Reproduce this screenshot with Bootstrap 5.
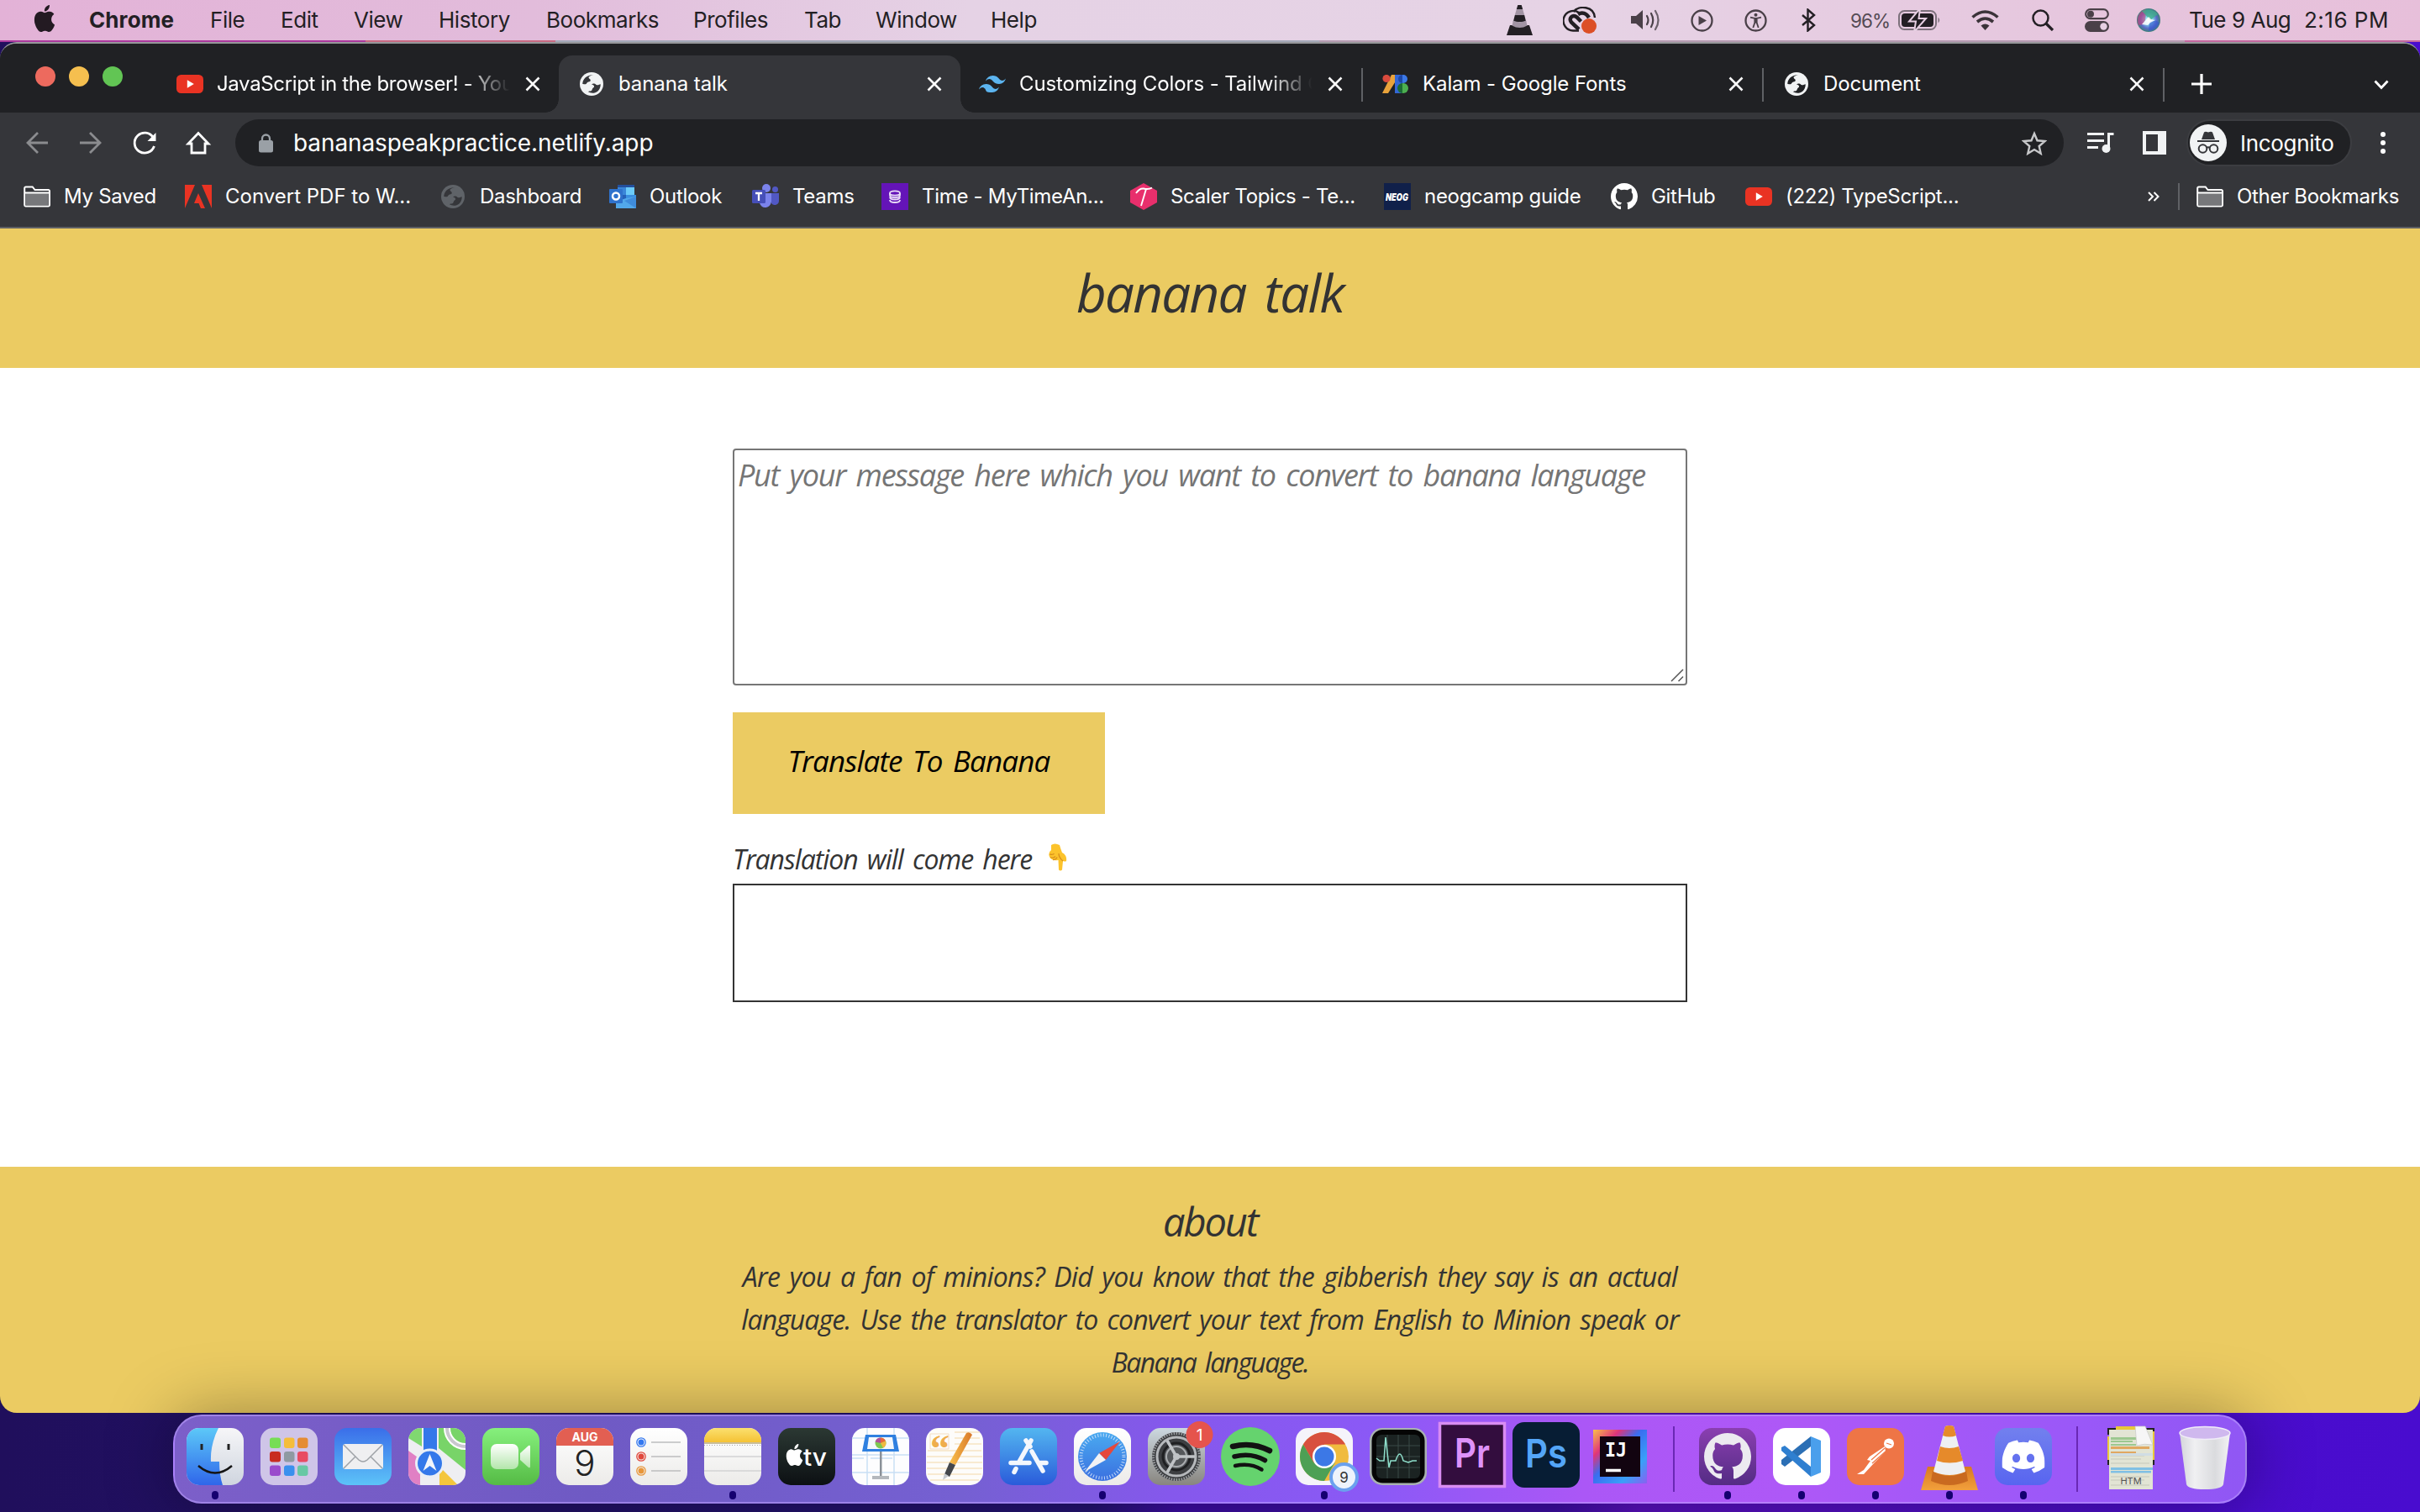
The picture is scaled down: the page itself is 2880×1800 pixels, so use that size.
<!DOCTYPE html>
<html lang="en">
<head>
<meta charset="utf-8">
<title>banana talk</title>
<link href="https://cdn.jsdelivr.net/npm/bootstrap@5.3.0/dist/css/bootstrap.min.css" rel="stylesheet">
<script src="https://cdn.jsdelivr.net/npm/bootstrap@5.3.0/dist/js/bootstrap.bundle.min.js"></script>
<style>
:root{--banana:#ebcb62;--ink:#333}
html,body{width:2880px;height:1800px;overflow:hidden}
body{font-family:Inter,"Liberation Sans",sans-serif;font-size:24px;line-height:1.2;white-space:nowrap;
 background:linear-gradient(90deg,#200f5c 0,#241373 1300px,#3d0da4 1400px,#3d0da4 1850px,#5a10c0 1950px,#4a0dcc 2600px,#490ccf 100%)}
svg{display:block;flex:none}
/* system menu bar */
.sysbar{height:48px;padding-left:40px;font-size:26px;color:#231f24;letter-spacing:-.45px;
 display:grid;align-items:center;background:linear-gradient(90deg,#e3b2d7,#e2bcdb 22%,#e5d2e5 40%,#e6d3e5 65%,#e6c5dd 88%,#e7bfda);
 grid-template-columns:66px 144px 84px 87px 101px 128px 175px 132px 85px 137px 614px 67px 80px 72px 64px 67px 59px 57px 87px 72px 63px 62px 62px 137px auto}
.sysbar b{letter-spacing:.1px}
.sysbar .pct{font-size:22.500px;letter-spacing:-.9px;color:#544a54}
.sysbar .clock{letter-spacing:.5px}
.wall-strip{height:2px;background:linear-gradient(90deg,#ab399d 0 435px,#c76a82 435px 661px,#a5a9b9 661px 1570px,#b59bb1 1570px 2600px,#c468a0 2600px)}
/* browser */
.browser-win{height:1632px;background:#35363a;border-top:2px solid #97989b;border-radius:20px;overflow:hidden;position:relative}
.tabstrip{height:82px;background:#202124;color:#fff;--land:#202124}
.lights{width:187px;padding-left:42px;gap:16px}
.lights i{width:24px;height:24px;border-radius:50%;margin-top:-4px}
.lights .l1{background:#ed6a5e}.lights .l2{background:#f5bf4f}.lights .l3{background:#62c554}
.btab{width:478px;height:68px;margin-top:14px;padding:0 22px 0 23px;letter-spacing:-.1px}
.btab .ttl{flex:1;margin-left:16px;margin-right:15px;overflow:hidden;padding:4px 0}
.btab.faded .ttl{-webkit-mask-image:linear-gradient(90deg,#000 84%,transparent 99%)}
.btab.first .ttl{letter-spacing:-.35px}
.btab.third{width:477px;padding-left:22px}
.btab.short{width:475px}
.btab.live{background:#35363a;border-radius:16px 16px 0 0;position:relative;--land:#35363a}
.btab.live:before,.btab.live:after{content:"";position:absolute;bottom:0;width:16px;height:16px}
.btab.live:before{left:-16px;background:radial-gradient(circle at 0 0,transparent 15.5px,#35363a 16px)}
.btab.live:after{right:-16px;background:radial-gradient(circle at 100% 0,transparent 15.5px,#35363a 16px)}
.sep{width:2px;height:40px;background:#5f6165}
.tabstrip .sep{margin-top:16px}
.plus{margin:14px 0 0 32px}.caret{margin:16px 0 0 193px}
.addrbar{height:72px;color:#fff}
.omni{width:2176px;height:56px;border-radius:28px;background:#202124;font-size:28px;padding:0 20px 0 28px;letter-spacing:-.1px}
.omni span{margin-left:24px;padding-top:2px}
.incog{width:197px;height:56px;border-radius:28px;background:#202124;border:2px solid #3c3d41;padding-left:2px;font-size:26px;letter-spacing:-.3px}
.incog span{margin-left:16px;padding-top:2px}
.kebab{margin-left:33px}
.marks{height:64px;color:#fff;display:grid;align-items:center;padding-left:28px;padding-bottom:8px;letter-spacing:-.3px;--land:#35363a;
 grid-template-columns:192px 304px 201px 170px 154px 296px 302px 270px 160px 479px 36px 22px auto}
.marks .bmk{display:flex;align-items:center;gap:16px}
.marks .wide-name{letter-spacing:0}.marks .sep{height:32px}
.chrome-edge{height:2px;background:#5f6063}
/* page */
.kalam{font-family:"Open Sans","Noto Sans",sans-serif;font-style:italic;color:var(--ink)}
.kalam span{word-spacing:.12em}
.site-top{height:166px;background:var(--banana)}
.site-top h1{font-size:62px;line-height:1;margin:0;padding-top:45px;font-weight:500;letter-spacing:-1.760px}
.site-main{width:1136px;height:951px;padding-top:96px}
.msg{height:282px;width:1136px;border:2px solid #767676;border-radius:4px;padding:6px 4px;font-size:36px;line-height:48px;color:#757575;letter-spacing:-1.280px}
.go{width:443px;height:121px;margin-top:32px;background:var(--banana);color:#000;border:0;font-size:35px;font-weight:500;letter-spacing:-.86px;padding:0 0 6px}
.outlbl{font-size:32px;line-height:52px;margin-top:28px;height:55px;letter-spacing:-1.040px}
.outlbl svg{margin:7px 0 0 20px}
.outbox{height:141px;border:2px solid #333}
.site-foot{height:293px;background:var(--banana)}
.site-foot h2{font-size:47px;line-height:56px;margin:0;padding-top:37px;font-weight:500;letter-spacing:-2.150px}
.site-foot p{font-size:32px;line-height:51px;margin:0;padding-top:12px;letter-spacing:-.83px}
.site-foot .ln1{letter-spacing:-.74px}.site-foot .ln2{letter-spacing:-.93px}.site-foot .ln3{letter-spacing:-1.650px}
/* dock */
.dock-bar{width:2468px;height:106px;margin:2px 0 0 206px;border-radius:34px;border:2px solid rgba(190,160,255,.55);padding:0 4px;position:relative;
 background:linear-gradient(90deg,#7c5fc9 0,#6f5ac4 20%,#7560d2 38%,#8558ec 48%,#8b59f6 58%,#ab57f6 68%,#ae58f7 78%,#9a58f8 92%,#9057f4);
 box-shadow:0 0 80px rgba(0,0,0,.36)}
.app{width:88px;height:100%;position:relative;padding-bottom:6px}
.app>svg{overflow:visible}
.app.run:after{content:"";position:absolute;left:40px;bottom:3px;width:8px;height:10px;border-radius:4px;background:#150070}
.app.tall{padding-bottom:11px}.app.low{padding-bottom:2px}
.dsep{width:40px}.dsep i{width:2px;height:78px;background:#6a28b4}
svg text{font-family:Inter,"Liberation Sans",sans-serif}
svg .serif{font-family:"Liberation Serif",serif}
svg .mono{font-family:"DejaVu Sans Mono",monospace}
</style>
</head>
<body>
<svg width="0" height="0" class="position-absolute">
<defs>
<symbol id="globe" viewBox="0 0 28 28"><circle cx="14" cy="14" r="14" fill="currentColor"/><path d="M16 3.200c-3 .8-5.700 1.500-5.400 3.300.3 1.500 2.400 1.700 2.200 3.400-.2 1.500-2.500 1.200-3.700 2-1 .7-1 2.100-2.300 2.400-1.300.2-2-.5-3.500-.3 0-5.600 4.600-11 12.700-10.800zM24.800 14.200c-1.500.1-2.600 1.200-4.200 1-1.600-.1-2-1.700-3.500-1.700s-2 .6-3.300.6c1.600 1.300 3.300 1.200 3.300 2.900 0 1.300-1.400 1.500-2 2.500-.6 1.200-.3 2.200-1.800 2.800-1.200.4-2.500.2-3.300 1 4 2.800 14.300 2.500 14.800-9.100z" fill="var(--land)"/></symbol>
<symbol id="xx" viewBox="0 0 18 18"><path d="M1.500 1.500l15 15M16.500 1.500l-15 15" stroke="#fff" stroke-width="2.500" fill="none"/></symbol>
<symbol id="yt" viewBox="0 0 32 22"><rect width="32" height="22" rx="5.500" fill="#e93323"/><path d="M12.800 6.200v9.600l8-4.800z" fill="#fff"/></symbol>
<symbol id="folder" viewBox="0 0 32 26"><path d="M1.200 23V3a1.500 1.500 0 0 1 1.500-1.500h8L13.500 5h16A1.500 1.500 0 0 1 31 6.500V23a1.500 1.500 0 0 1-1.500 1.500h-27A1.500 1.500 0 0 1 1.200 23z" fill="#35363a" stroke="#fff" stroke-width="2"/><path d="M2.200 9h27.600v14.500H2.200z" fill="#77787b"/><path d="M2 8.500h28" stroke="#fff" stroke-width="2"/></symbol>
<symbol id="gh" viewBox="0 0 16 16"><path fill="currentColor" d="M8 0C3.580 0 0 3.580 0 8c0 3.540 2.290 6.530 5.470 7.590.4.070.55-.17.55-.38 0-.19-.01-.82-.01-1.490-2.010.37-2.530-.49-2.690-.94-.09-.23-.48-.94-.82-1.130-.28-.15-.68-.52-.01-.53.63-.01 1.080.58 1.230.82.72 1.210 1.870.87 2.330.66.07-.52.28-.87.51-1.070-1.780-.2-3.640-.89-3.640-3.950 0-.87.31-1.590.82-2.150-.08-.2-.36-1.020.08-2.120 0 0 .67-.21 2.200.82.64-.18 1.320-.27 2-.27s1.360.09 2 .27c1.530-1.040 2.200-.82 2.200-.82.44 1.100.16 1.920.08 2.120.51.56.82 1.270.82 2.150 0 3.070-1.870 3.750-3.650 3.950.29.25.54.73.54 1.480 0 1.070-.01 1.930-.01 2.200 0 .21.15.46.55.38A8.010 8.010 0 0 0 16 8c0-4.420-3.580-8-8-8z"/></symbol>
<symbol id="apple" viewBox="1 0 14 16" preserveAspectRatio="none"><path fill="currentColor" d="M11.182.008C11.148-.03 9.923.023 8.857 1.180c-1.066 1.156-.902 2.482-.878 2.516s1.520.087 2.475-1.258.762-2.391.728-2.430zm3.314 11.733c-.048-.096-2.325-1.234-2.113-3.422s1.675-2.789 1.698-2.854-.597-.79-1.254-1.157a3.700 3.700 0 0 0-1.563-.434c-.108-.003-.483-.095-1.254.116-.508.139-1.653.589-1.968.607-.316.018-1.256-.522-2.267-.665-.647-.125-1.333.131-1.824.328-.49.196-1.422.754-2.074 2.237-.652 1.482-.311 3.830-.067 4.560s.625 1.924 1.273 2.796c.576.984 1.340 1.667 1.659 1.899s1.219.386 1.843.067c.502-.308 1.408-.485 1.766-.472.357.013 1.061.154 1.782.539.571.197 1.111.115 1.652-.105.541-.221 1.324-1.059 2.238-2.758q.52-1.185.473-1.282"/></symbol>
<linearGradient id="g-find" x2="0" y2="1"><stop stop-color="#5cc8f8"/><stop offset="1" stop-color="#2f66ea"/></linearGradient>
<linearGradient id="g-lite" x2="0" y2="1"><stop stop-color="#f6f6f8"/><stop offset="1" stop-color="#cfd5df"/></linearGradient>
<linearGradient id="g-mail" x2="0" y2="1"><stop stop-color="#3a6ee9"/><stop offset="1" stop-color="#5cc3f8"/></linearGradient>
<linearGradient id="g-ft" x2="0" y2="1"><stop stop-color="#86f07d"/><stop offset="1" stop-color="#55bb45"/></linearGradient>
<linearGradient id="g-ftc" x2="0" y2="1"><stop stop-color="#fff"/><stop offset="1" stop-color="#b3e6ab"/></linearGradient>
<linearGradient id="g-white" x2="0" y2="1"><stop stop-color="#fff"/><stop offset="1" stop-color="#ecebe9"/></linearGradient>
<linearGradient id="g-note" x2="0" y2="1"><stop stop-color="#fbe06f"/><stop offset="1" stop-color="#f5c234"/></linearGradient>
<linearGradient id="g-tv" x2="0" y2="1"><stop stop-color="#2b3833"/><stop offset="1" stop-color="#0c1013"/></linearGradient>
<linearGradient id="g-as" x2="0" y2="1"><stop stop-color="#53b6f0"/><stop offset="1" stop-color="#2a5bda"/></linearGradient>
<linearGradient id="g-saf" x2="0" y2="1"><stop stop-color="#4aaaf0"/><stop offset="1" stop-color="#3a70e0"/></linearGradient>
<linearGradient id="g-set" x2="0" y2="1"><stop stop-color="#ccd8e0"/><stop offset="1" stop-color="#88857f"/></linearGradient>
<linearGradient id="g-gh" x2="0" y2="1"><stop stop-color="#8a3fb0"/><stop offset="1" stop-color="#542c84"/></linearGradient>
<linearGradient id="g-dc" x2="0" y2="1"><stop stop-color="#7280ee"/><stop offset="1" stop-color="#5865f0"/></linearGradient>
<linearGradient id="g-pen" x2="1" y2="0"><stop stop-color="#f9c04c"/><stop offset="1" stop-color="#d9782a"/></linearGradient>
<linearGradient id="g-trash" x2="1" y2="0"><stop stop-color="#d4d5da"/><stop offset=".3" stop-color="#f0f0f2"/><stop offset=".7" stop-color="#dadbde"/><stop offset="1" stop-color="#f2f2f4"/></linearGradient>
<linearGradient id="g-ij" x2="1" y2="1"><stop stop-color="#f9c04a"/><stop offset=".25" stop-color="#e0357a"/><stop offset=".45" stop-color="#3a6df0"/><stop offset=".75" stop-color="#3aa0f8"/><stop offset="1" stop-color="#8a60f0"/></linearGradient>
<linearGradient id="g-cone" x2="0" y2="1"><stop stop-color="#d97a22"/><stop offset="1" stop-color="#f2a03c"/></linearGradient>
<radialGradient id="g-siri"><stop stop-color="#f4ffff"/><stop offset=".35" stop-color="#7fd0e8"/><stop offset=".7" stop-color="#5a6cc8"/><stop offset="1" stop-color="#3d7f78"/></radialGradient>
<clipPath id="sq"><rect width="68" height="68" rx="15"/></clipPath>
</defs>
</svg>

<nav class="sysbar">
<svg width="26" height="32" class="mb-1" color="#231a22"><use href="#apple"/></svg>
<b>Chrome</b><span>File</span><span>Edit</span><span>View</span><span>History</span><span>Bookmarks</span><span>Profiles</span><span>Tab</span><span>Window</span><span>Help</span>
<svg width="31" height="36" viewBox="0 0 31 36"><path d="M4 24h23l4 12H0z" fill="#231f24"/><path d="M13.300 0h4.400l1.500 5h-7.400z" fill="#231f24"/><path d="M11.800 5h7.400l2 7H9.800z" fill="#a294a4"/><path d="M9.800 12h11.400l2 8H7.800z" fill="#231f24"/><path d="M7.800 18.500q7.700 3.500 15.400 0l1.300 6q-9 5-18 0z" fill="#a294a4"/></svg>
<svg width="41" height="33" viewBox="0 0 41 33"><g fill="none" stroke="#231f24" stroke-width="2.400"><path d="M19 28.500H12A11.800 11.800 0 1 1 19 7"/><path d="M12.500 6C19-2 37-1 38 13"/><path d="M19 27l-9-8.500c-4-5 2-10 6.500-6l5 5" stroke-width="4.500"/><path d="M18 9c5-3 10-1 13 4" stroke-width="4.500"/></g><circle cx="31" cy="23" r="9" fill="#dc4f26"/></svg>
<svg width="36" height="26" viewBox="0 0 36 26"><path d="M1 8h6l8-7v23l-8-7H1z" fill="#4a4048"/><g fill="none" stroke="#4a4048" stroke-width="2.200" stroke-linecap="round"><path d="M20 8q3 5 0 10"/><path d="M25 5q4.500 8 0 16"/><path d="M30 2q7 11 0 22" stroke="#6b606a"/></g></svg>
<svg width="27" height="27" viewBox="0 0 27 27"><circle cx="13.500" cy="13.500" r="12" fill="none" stroke="#4a4048" stroke-width="2.300"/><path d="M9.500 8l9.500 5.500-9.500 5.500z" fill="#4a4048"/></svg>
<svg width="27" height="27" viewBox="0 0 27 27"><circle cx="13.500" cy="13.500" r="12" fill="none" stroke="#4a4048" stroke-width="2.300"/><circle cx="13.500" cy="6.700" r="2" fill="#4a4048"/><path d="M7 9.700l5.500 1.200h2L20 9.700M12.300 11v5l-2 6M14.700 11v5l2 6" stroke="#4a4048" stroke-width="1.800" fill="none"/><path d="M12 10.500h3v6h-3z" fill="#4a4048"/></svg>
<svg width="19" height="28" viewBox="0 0 19 28"><path d="M2 8l14 12-7.500 6.500v-25L16 8 2 20" fill="none" stroke="#231f24" stroke-width="2.400"/></svg>
<span class="pct">96%</span>
<svg width="51" height="26" viewBox="0 0 51 26"><rect x="1" y="2" width="44" height="22" rx="6.500" fill="none" stroke="#7d717c" stroke-width="2"/><rect x="4" y="5" width="38" height="16" rx="4" fill="#231f24"/><path d="M47.500 9.500q3.500 3.500 0 7z" fill="#7d717c"/><path d="M26-1L13 14.500h8L19 27 33 11h-8.500z" fill="#231f24" stroke="#e6cfe2" stroke-width="2"/></svg>
<svg width="33" height="24" viewBox="0 0 33 24"><g fill="none" stroke="#3b3339" stroke-width="3.600"><path d="M1.500 8.500q15-13 30 0"/><path d="M7 14q9.500-8 19 0"/></g><path d="M11.500 18.500q5-4 10 0l-5 5.500z" fill="#3b3339"/></svg>
<svg width="27" height="26" viewBox="0 0 27 26"><circle cx="10.500" cy="10.500" r="9" fill="none" stroke="#231f24" stroke-width="2.500"/><path d="M17 17l8 8" stroke="#231f24" stroke-width="3.200"/></svg>
<svg width="29" height="28" viewBox="0 0 29 28"><rect x="1.200" y="1.200" width="26.600" height="11" rx="5.500" fill="none" stroke="#4a4048" stroke-width="2.200"/><circle cx="7" cy="6.700" r="4" fill="#4a4048"/><rect y="15" width="29" height="13" rx="6.500" fill="#4a4048"/><circle cx="22.500" cy="21.500" r="4.200" fill="#e6cfe2"/></svg>
<svg width="28" height="28" viewBox="0 0 28 28"><circle cx="14" cy="14" r="14" fill="url(#g-siri)"/><path d="M2 20A14 14 0 0 1 10 1q2 10-2 18z" fill="#c9407c" opacity=".6"/><path d="M14 27q10-1 13-10-8-6-12 0z" fill="#3556d0" opacity=".6"/><path d="M6 3q11-5 19 4l-9 7z" fill="#3fae88" opacity=".8"/><path d="M6 19l8-9 3 3 5 1-6 3-3 3z" fill="#fff" opacity=".85"/></svg>
<span>Tue 9 Aug</span><span class="clock">2:16 PM</span>
</nav>
<div class="wall-strip"></div>

<div class="browser-win">
<div class="tabstrip d-flex align-items-center">
 <div class="lights d-flex flex-shrink-0"><i class="l1"></i><i class="l2"></i><i class="l3"></i></div>
 <div class="btab first faded d-flex align-items-center flex-shrink-0"><svg width="32" height="22"><use href="#yt"/></svg><span class="ttl">JavaScript in the browser! - You</span><svg width="18" height="18"><use href="#xx"/></svg></div>
 <div class="btab live d-flex align-items-center flex-shrink-0"><svg width="32" height="28" viewBox="-2 0 32 28"><use href="#globe" color="#f1f3f4" width="28" height="28"/></svg><span class="ttl">banana talk</span><svg width="18" height="18"><use href="#xx"/></svg></div>
 <div class="btab third faded d-flex align-items-center flex-shrink-0"><svg width="32" height="20" viewBox="0 0 32 20"><path fill="#5cb4ef" d="M8 6.500Q10 0 16.500 0c6.500 0 7 5 10.300 5.800Q30 6.400 32 3.500 30 10 24 10c-6.500 0-7.300-5-10.500-5.800Q10.500 3.600 8 6.500zM0 16.500Q2 10 8.500 10c6.500 0 7 5 10.300 5.800Q22 16.400 24 13.500 22 20 16 20 9.500 20 8.700 18.500 7.700 15 5.500 14.200 2.500 13.600 0 16.500z"/></svg><span class="ttl">Customizing Colors - Tailwind CSS</span><svg width="18" height="18"><use href="#xx"/></svg></div>
 <div class="sep"></div>
 <div class="btab short d-flex align-items-center flex-shrink-0"><svg width="32" height="22" viewBox="0 0 32 22"><path d="M11 0h6v6L7 22H0z" fill="#e9a33b"/><path d="M15 0h9v22h-9z" fill="#3367d6"/><circle cx="5" cy="4.500" r="4.600" fill="#d94a3d"/><circle cx="25" cy="5" r="5" fill="#3b78e7"/><circle cx="25" cy="16" r="6" fill="#4caf50"/><path d="M24 0v10a5 5 0 0 1 0-10z" fill="#1d48a8"/><path d="M24 10v12a6 6 0 0 1 0-12z" fill="#1b6b35"/></svg><span class="ttl">Kalam - Google Fonts</span><svg width="18" height="18"><use href="#xx"/></svg></div>
 <div class="sep"></div>
 <div class="btab short d-flex align-items-center flex-shrink-0"><svg width="32" height="28" viewBox="-2 0 32 28"><use href="#globe" color="#f1f3f4" width="28" height="28"/></svg><span class="ttl">Document</span><svg width="18" height="18"><use href="#xx"/></svg></div>
 <div class="sep"></div>
 <svg class="plus" width="24" height="24" viewBox="0 0 24 24"><path d="M12 0v24M0 12h24" stroke="#fff" stroke-width="3.200"/></svg>
 <svg class="caret" width="18" height="12" viewBox="0 0 18 12"><path d="M1.500 1.500L9 9.500l7.500-8" stroke="#fff" stroke-width="2.800" fill="none"/></svg>
</div>
<div class="addrbar d-flex align-items-center">
 <svg width="280" height="56" viewBox="0 142 280 56" fill="none" stroke-width="2.800"><path d="M57 170H33M45 158l-12 12 12 12" stroke="#8b8c8f"/><path d="M95 170h24M107 158l12 12-12 12" stroke="#8b8c8f"/><path d="M182.500 164a12 12 0 1 0 1 10" stroke="#fff"/><path d="M185.500 158v10h-10z" fill="#fff"/><path d="M228 182v-11h-4l12-12.500 12 12.500h-4v11z" stroke="#fff"/></svg>
 <div class="omni d-flex align-items-center">
  <svg width="17" height="23" viewBox="0 0 17 23"><rect y="8" width="17" height="14.500" rx="2.500" fill="#9aa0a6"/><path d="M4 9V6a4.500 4.500 0 0 1 9 0v3" fill="none" stroke="#9aa0a6" stroke-width="2.300"/></svg>
  <span>bananaspeakpractice.netlify.app</span>
  <svg class="ms-auto" width="30" height="29" viewBox="0 0 30 29"><path d="M15 3l3.500 8.300 9 .8-6.800 5.900 2 8.800L15 22.100l-7.700 4.700 2-8.800L2.500 12.100l9-.8z" fill="none" stroke="#c7c8ca" stroke-width="2.400"/></svg>
 </div>
 <svg width="146" height="56" viewBox="2456 142 146 56"><path d="M2484 159.500h20M2484 167.500h20M2484 175.500h13" stroke="#f1f3f4" stroke-width="3"/><path d="M2509.500 177v-17.500h6" fill="none" stroke="#f1f3f4" stroke-width="3"/><circle cx="2506.500" cy="177" r="5" fill="#f1f3f4"/><path fill-rule="evenodd" d="M2550 156h28v28h-28zm4 4v20h14v-20z" fill="#f1f3f4"/></svg>
 <div class="incog d-flex align-items-center">
  <svg width="44" height="44" viewBox="0 0 44 44"><circle cx="22" cy="22" r="22" fill="#f1f3f4"/><path d="M17 9.500q1.500-1.500 5 0 3.500-1.500 5 0l3 8.500H14z" fill="#35363a"/><path d="M9 20h26" stroke="#35363a" stroke-width="2.200"/><g fill="none" stroke="#35363a" stroke-width="2"><circle cx="15.500" cy="29" r="4.800"/><circle cx="28.500" cy="29" r="4.800"/><path d="M20 28q2-1.500 4 0"/></g></svg>
  <span>Incognito</span>
 </div>
 <svg class="kebab" width="8" height="28" viewBox="0 0 8 28"><circle cx="4" cy="4" r="3" fill="#fff"/><circle cx="4" cy="14" r="3" fill="#fff"/><circle cx="4" cy="24" r="3" fill="#fff"/></svg>
</div>
<div class="marks">
 <div class="bmk"><svg width="32" height="26"><use href="#folder"/></svg><span>My Saved</span></div>
 <div class="bmk"><svg width="32" height="28" viewBox="0 0 32 28"><path fill="#e93323" d="M0 0h12L0 28zM20 0h12v28zM16 10l8 18h-5l-2.500-6H11z"/></svg><span class="wide-name">Convert PDF to W...</span></div>
 <div class="bmk"><svg width="31" height="28" viewBox="-1 0 31 28"><use href="#globe" color="#5f6368" width="28" height="28"/></svg><span>Dashboard</span></div>
 <div class="bmk"><svg width="32" height="28" viewBox="0 0 32 28"><path d="M10 0h20v3H10z" fill="#234f9c"/><path d="M10 3h10v9H10z" fill="#3a86d8"/><path d="M20 3h10v9H20z" fill="#6ccbf8"/><path d="M10 12h10v8H10z" fill="#2561b8"/><path d="M20 12h12v8H20z" fill="#3a8fe0"/><path d="M8 20l12-4 12-2v14H8z" fill="#52a8ea"/><path d="M18 19l14 9V14z" fill="#3f8cdb"/><rect y="5" width="16" height="17" rx="1" fill="#2f72cc"/><circle cx="8" cy="13.500" r="4" fill="none" stroke="#fff" stroke-width="2.500"/></svg><span>Outlook</span></div>
 <div class="bmk"><svg width="32" height="30" viewBox="0 0 32 30"><circle cx="27.500" cy="6.500" r="3.500" fill="#5158c4"/><circle cx="17" cy="5" r="5" fill="#7b83eb"/><path d="M20 11h12v9a5 5 0 0 1-9 3z" fill="#5158c4"/><path d="M9 11h14v10a7.500 9 0 0 1-14 2z" fill="#7b83eb"/><rect y="7" width="16" height="16" rx="1.500" fill="#464fb8"/><path d="M4 11h8M8 11v9" stroke="#fff" stroke-width="2.300"/></svg><span>Teams</span></div>
 <div class="bmk"><svg width="32" height="32" viewBox="0 0 32 32"><path fill="#6414b8" d="M0 0h32v32H0z"/><g fill="none" stroke="#e8dcf6" stroke-width="1.800"><ellipse cx="16" cy="12" rx="6" ry="2.600"/><path d="M10 12v2.500c0 3.500 12 3.500 12 0V12M10 16.500c0 4 12 4 12 0M10 20c0 4 12 4 12 0"/></g></svg><span>Time - MyTimeAn...</span></div>
 <div class="bmk"><svg width="32" height="32" viewBox="0 0 32 32"><path fill="#e82f6c" d="M16 0l16 9v14l-16 9L0 23V9z"/><path d="M7 12q4-6 9-5.500 6 1.500 10-1M19 7l-6 20" stroke="#fff" stroke-width="1.900" fill="none"/></svg><span>Scaler Topics - Te...</span></div>
 <div class="bmk"><svg width="32" height="32" viewBox="0 0 32 32"><path fill="#10204a" d="M0 0h32v32H0z"/><text x="2" y="21" font-size="12" letter-spacing="0" font-weight="900" font-style="italic" textLength="27" lengthAdjust="spacingAndGlyphs" fill="#fff">NEOG</text></svg><span>neogcamp guide</span></div>
 <div class="bmk"><svg width="32" height="32" color="#fff"><use href="#gh"/></svg><span>GitHub</span></div>
 <div class="bmk"><svg width="32" height="22"><use href="#yt"/></svg><span>(222) TypeScript...</span></div>
 <svg width="14" height="12" viewBox="0 0 14 12"><path d="M1 1l5 5-5 5M7.500 1l5 5-5 5" stroke="#fff" stroke-width="2" fill="none"/></svg>
 <div class="sep"></div>
 <div class="bmk"><svg width="32" height="26"><use href="#folder"/></svg><span>Other Bookmarks</span></div>
</div>
<div class="chrome-edge"></div>

<header class="site-top text-center kalam"><h1><span>banana talk</span></h1></header>
<div class="bg-white">
<main class="site-main mx-auto kalam">
 <div class="msg position-relative"><span>Put your message here which you want to convert to banana language</span>
  <svg class="position-absolute bottom-0 end-0" width="18" height="18" viewBox="0 0 18 18"><path d="M1 15L15 1M9.500 15L15 9.500" stroke="#555" stroke-width="1.500"/></svg></div>
 <button class="go kalam d-block"><span>Translate To Banana</span></button>
 <div class="outlbl d-flex align-items-start"><span>Translation will come here</span>
  <svg width="22" height="33" viewBox="0 0 22 33"><path d="M3 2Q7-1 13 2q1 4 3 9 6 3 5 10-1 1-4 0l-1 10.500q-2 2-4 0L11.500 20Q3 21 1 16-1 11 3 8z" fill="#fcc32c"/><path d="M1.500 13q4 1 5-1M2 16.500q4 1.500 6-1M5 19.500q4 0 5-3M12 12q0 5 5 9" stroke="#d9901c" stroke-width="1.300" fill="none"/></svg></div>
 <div class="outbox"></div>
</main>
</div>
<footer class="site-foot text-center kalam">
 <h2><span>about</span></h2>
 <p><span class="ln1">Are you a fan of minions? Did you know that the gibberish they say is an actual</span><br><span class="ln2">language. Use the translator to convert your text from English to Minion speak or</span><br><span class="ln3">Banana language.</span></p>
</footer>
</div>

<div class="dock-bar d-flex align-items-center">
 <div class="app run d-flex align-items-center justify-content-center"><svg width="68" height="68"><g clip-path="url(#sq)"><path d="M0 0h68v68H0z" fill="url(#g-lite)"/><path d="M0 0h38Q28 20 29 40h10q0 16 4 28H0z" fill="url(#g-find)"/></g><path d="M18 19v7M50 19v7" stroke="#222" stroke-width="3"/><path d="M14 45q20 17 40 0" stroke="#151515" stroke-width="2.500" fill="none"/></svg></div>
 <div class="app d-flex align-items-center justify-content-center"><svg width="68" height="68"><rect width="68" height="68" rx="15" fill="#cfc5e8"/><g><rect x="11" y="11.500" width="13" height="12.500" rx="3" fill="#77dd55"/><rect x="28" y="11.500" width="12.500" height="12.500" rx="3" fill="#f5bd3b"/><rect x="44" y="11.500" width="12.500" height="12.500" rx="3" fill="#e58c34"/><rect x="11" y="28" width="13" height="12.500" rx="3" fill="#c82c20"/><rect x="28" y="28" width="12.500" height="12.500" rx="3" fill="#8f9aa2"/><rect x="44" y="28" width="12.500" height="12.500" rx="3" fill="#e84b62"/><rect x="11" y="44.500" width="13" height="12.500" rx="3" fill="#9a4bcc"/><rect x="28" y="44.500" width="12.500" height="12.500" rx="3" fill="#3a90ee"/><rect x="44" y="44.500" width="12.500" height="12.500" rx="3" fill="#68c8a4"/></g></svg></div>
 <div class="app d-flex align-items-center justify-content-center"><svg width="68" height="68"><rect width="68" height="68" rx="15" fill="url(#g-mail)"/><rect x="10" y="19" width="48" height="30" rx="3" fill="#efeff1"/><path d="M11 20l18 18q5 4 10 0l18-18M11 48l14-14M57 48L43 34" stroke="#9fa3a8" stroke-width="1.500" fill="none"/></svg></div>
 <div class="app d-flex align-items-center justify-content-center"><svg width="68" height="68"><g clip-path="url(#sq)"><path d="M0 0h68v68H0z" fill="#eeeef2"/><path d="M0 0h16v22L0 12z" fill="#80d870"/><path d="M36 0h32v50L36 24z" fill="#78d468"/><path d="M0 27l14 10v31H0z" fill="#e080c4"/><path d="M37 46l22 22H37z" fill="#f4c63c"/><path d="M18 0h16v34H18z" fill="#3478ea"/><circle cx="68" cy="0" r="22" fill="none" stroke="#fff" stroke-width="8"/><circle cx="68" cy="0" r="22" fill="none" stroke="#c8c8ce" stroke-width="4"/></g><circle cx="25.500" cy="42" r="16" fill="#3478ea" stroke="#e9eef6" stroke-width="3"/><path d="M25.500 31l8 20-8-6-8 6z" fill="#f2f5fb"/></svg></div>
 <div class="app d-flex align-items-center justify-content-center"><svg width="68" height="68"><rect width="68" height="68" rx="15" fill="url(#g-ft)"/><rect x="10" y="19" width="33" height="30" rx="7" fill="url(#g-ftc)"/><path d="M45 30l10-9q2-1 2 1v24q0 2-2 1l-10-9z" fill="url(#g-ftc)"/></svg></div>
 <div class="app d-flex align-items-center justify-content-center"><svg width="68" height="68"><g clip-path="url(#sq)"><path d="M0 0h68v68H0z" fill="url(#g-white)"/><path d="M0 0h68v21H0z" fill="#e25f52"/></g><text x="34" y="16" font-size="14" font-weight="700" fill="#fff" text-anchor="middle">AUG</text><text x="34" y="57" font-size="42" font-weight="300" fill="#222" text-anchor="middle">9</text></svg></div>
 <div class="app d-flex align-items-center justify-content-center"><svg width="68" height="68"><rect width="68" height="68" rx="15" fill="url(#g-white)"/><g stroke-width="1.300" fill="none"><circle cx="13" cy="17" r="5.200" stroke="#3478f0"/><circle cx="13" cy="34" r="5.200" stroke="#e0483c"/><circle cx="13" cy="51" r="5.200" stroke="#e8963a"/><path d="M25 17h35M25 34h35M25 51h35" stroke="#bdbdbf"/></g><circle cx="13" cy="17" r="3.500" fill="#3478f0"/><circle cx="13" cy="34" r="3.500" fill="#e0483c"/><circle cx="13" cy="51" r="3.500" fill="#e8963a"/></svg></div>
 <div class="app run d-flex align-items-center justify-content-center"><svg width="68" height="68"><g clip-path="url(#sq)"><path d="M0 0h68v68H0z" fill="url(#g-white)"/><path d="M0 0h68v17H0z" fill="url(#g-note)"/><path d="M0 18h68" stroke="#b8a878" stroke-width="1.500"/><path d="M0 20.500h68" stroke="#aaa" stroke-dasharray="1 2"/><path d="M0 34h68M0 51h68" stroke="#d2d2d4" stroke-width="1.500"/></g></svg></div>
 <div class="app d-flex align-items-center justify-content-center"><svg width="68" height="68"><rect width="68" height="68" rx="15" fill="url(#g-tv)"/><svg x="9" y="19" width="21" height="26" color="#fff"><use href="#apple"/></svg><text x="30" y="44.500" font-size="28" font-weight="500" fill="#fff" textLength="28" lengthAdjust="spacingAndGlyphs">tv</text></svg></div>
 <div class="app d-flex align-items-center justify-content-center"><svg width="68" height="68"><rect width="68" height="68" rx="15" fill="#fdfdfe"/><path d="M18 0v68M50 0v68M0 12h68M0 32h68M0 36h14M0 53h68M22 36h26" stroke="#c9dff5" stroke-width="1.500" fill="none"/><path d="M33 28h2.500v32H33z" fill="#8a9098"/><path d="M24 57h20v4H24z" fill="#b4b8bd"/><path d="M16 8h36l4 20H12z" fill="#2f80e0"/><path d="M20 11h28l2 14H18z" fill="#f4f8fc"/><circle cx="34" cy="18" r="6.500" fill="#7cc850"/><path d="M34 18v-6.500a6.500 6.500 0 0 1 6 4z" fill="#e8683c"/><path d="M34 18l-6.300-1.500A6.500 6.500 0 0 1 34 11.500z" fill="#b0509c"/><path d="M34 18l6-2.500a6.500 6.500 0 0 1-3 8.200z" fill="#f0b840"/></svg></div>
 <div class="app d-flex align-items-center justify-content-center"><svg width="68" height="68"><rect width="68" height="68" rx="15" fill="#fdfcfa"/><path d="M34 5h30M34 12h30M34 19h32M2 27h64M1 34h66M1 41h66M1 48h66M2 55h64M5 62h58" stroke="#f6e3c4" stroke-width="1.300"/><path d="M5 7h22v18H5z" fill="#fdfcfa" stroke="#f3dfc4"/><text class="serif" x="5" y="40" font-size="46" font-weight="700" fill="#efae4c">“</text><path d="M48 6q4-2 7 2L35 44l-7-3z" fill="url(#g-pen)"/><path d="M28 41l7 3-7 14-6-3z" fill="#44474c"/><path d="M22 54l5 3-7 5z" fill="#c5c9ce"/></svg></div>
 <div class="app d-flex align-items-center justify-content-center"><svg width="68" height="68"><rect width="68" height="68" rx="15" fill="url(#g-as)"/><g stroke="#f3f7fd" stroke-width="5.500" stroke-linecap="round"><path d="M37 15L23 40M31 15l5 7M38 28l13 23M13 41.500h22M46 41.500h9M19 48.500l-2 4"/></g></svg></div>
 <div class="app run d-flex align-items-center justify-content-center"><svg width="68" height="68"><rect width="68" height="68" rx="15" fill="url(#g-white)"/><circle cx="34" cy="34" r="29" fill="url(#g-saf)"/><circle cx="34" cy="34" r="25.500" fill="none" stroke="#dbe9fb" stroke-width="4" stroke-dasharray="1 2.340" opacity=".85"/><path d="M55 16L38 38l-8-8z" fill="#e5483c"/><path d="M13 52l17-22 8 8z" fill="#f2f2f4"/></svg></div>
 <div class="app d-flex align-items-center justify-content-center"><svg width="68" height="68"><rect width="68" height="68" rx="15" fill="url(#g-set)"/><circle cx="34" cy="34" r="29" fill="#3d3f42"/><circle cx="34" cy="34" r="27.500" fill="none" stroke="#9c9fa2" stroke-width="3" stroke-dasharray="1.500 1.500"/><circle cx="34" cy="34" r="23" fill="none" stroke="#b5b8bb" stroke-width="3"/><circle cx="34" cy="34" r="16" fill="#55585b" stroke="#1f2022" stroke-width="3"/><circle cx="34" cy="34" r="12" fill="none" stroke="#a9acaf" stroke-width="2"/><path d="M34 34h22M34 34L23 15M34 34L23 53" stroke="#c0c3c6" stroke-width="3.500"/><circle cx="34" cy="34" r="4" fill="#c0c3c6"/><circle cx="61.500" cy="8" r="16" fill="#e5544c"/><text x="61.500" y="15" font-size="19" fill="#fff" text-anchor="middle">1</text></svg></div>
 <div class="app d-flex align-items-center justify-content-center"><svg width="70" height="70" viewBox="0 0 70 70"><circle cx="35" cy="35" r="35" fill="#65d36e"/><g fill="none" stroke="#121212" stroke-linecap="round"><path d="M14 23q23-6 44 5" stroke-width="6.500"/><path d="M16 35q20-5 36.500 4.500" stroke-width="5.500"/><path d="M17 46q18-4 31.500 4.500" stroke-width="4.500"/></g></svg></div>
 <div class="app run d-flex align-items-center justify-content-center"><svg width="68" height="68"><rect width="68" height="68" rx="15" fill="#f5f3fa"/><g transform="translate(34 34)"><circle r="29" fill="#f0bb3e"/><path d="M0-14.500H25.100A29 29 0 0 0-25.100-14.500L-12.600 7.300z" fill="#d8503f"/><path d="M-25.100-14.500A29 29 0 0 0 0 29L12.600 7.300-12.600 7.300z" fill="#4da055"/><circle r="14" fill="#fff"/><circle r="11.500" fill="#3c78e6"/></g><circle cx="57.500" cy="58.500" r="15.500" fill="#eef3fc" stroke="#6aa0ee" stroke-width="4"/><text x="57.500" y="64.500" font-size="17" fill="#333" text-anchor="middle">9</text></svg></div>
 <div class="app d-flex align-items-center justify-content-center"><svg width="68" height="68"><rect width="68" height="68" rx="15" fill="#a9b2b0"/><rect x="2.500" y="2" width="63" height="63.500" rx="13" fill="#050505"/><rect x="8" y="8" width="52" height="52" rx="6" fill="#1b2322"/><path d="M21 8v52M34 8v52M47 8v52M8 21h52M8 34h52M8 47h52" stroke="#3a4a46" stroke-width="1"/><path d="M8 36l4 3h5l2-28 4 36 2-8h6q5-16 9 0l6 2 5-2h5" stroke="#8fe0cc" stroke-width="1.500" fill="none"/></svg></div>
 <div class="app tall d-flex align-items-center justify-content-center"><svg width="80" height="78" viewBox="0 0 80 78"><path d="M1.500 1.500h77v75h-77z" fill="#330d3e" stroke="#d98cf2" stroke-width="3.500"/><text x="40" y="54" font-size="48" font-weight="600" fill="#de92fa" text-anchor="middle" textLength="42" lengthAdjust="spacingAndGlyphs">Pr</text></svg></div>
 <div class="app tall d-flex align-items-center justify-content-center"><svg width="80" height="78" viewBox="0 0 80 78"><rect width="80" height="78" rx="14" fill="#071d34"/><text x="40" y="54" font-size="47" font-weight="600" fill="#54a6f8" text-anchor="middle" textLength="50" lengthAdjust="spacingAndGlyphs">Ps</text></svg></div>
 <div class="app d-flex align-items-center justify-content-center"><svg width="64" height="64" viewBox="0 0 64 64"><path d="M0 0h64v64H0z" fill="url(#g-ij)"/><path d="M8 8h48v48H8z" fill="#120410"/><path d="M15 48.500h18" stroke="#fff" stroke-width="3.500"/><text class="mono" x="14" y="32" font-size="23" font-weight="700" fill="#fff" textLength="26" lengthAdjust="spacingAndGlyphs">IJ</text></svg></div>
 <div class="dsep d-flex justify-content-center"><i></i></div>
 <div class="app run d-flex align-items-center justify-content-center"><svg width="68" height="68"><rect width="68" height="68" rx="15" fill="url(#g-gh)"/><svg x="6" y="6" width="56" height="56" color="#eceaf0"><use href="#gh"/></svg></svg></div>
 <div class="app run d-flex align-items-center justify-content-center"><svg width="68" height="68"><rect width="68" height="68" rx="15" fill="#fff"/><path d="M45 10L10 38v5l4 3L45 22z" fill="#2b6fb5"/><path d="M45 58L10 27v-4l4-2L45 46z" fill="#2f7fd0"/><path d="M45 10l12 5v38l-12 5z" fill="#4a9fec"/></svg></div>
 <div class="app run d-flex align-items-center justify-content-center"><svg width="68" height="68"><rect width="68" height="68" rx="15" fill="#ee7546"/><circle cx="50" cy="18.500" r="6" fill="#fff"/><path d="M45 22L27 34l-3 4 4 1-8 11-8 5h8l13-14 13-13z" fill="#fff"/><path d="M45 24L29 38M47 27L30 42M47 18l6 2" stroke="#ee7546" stroke-width="1.200"/></svg></div>
 <div class="app run low d-flex align-items-center justify-content-center"><svg width="68" height="78" viewBox="0 0 68 78"><path d="M8 49h52l8 28H0z" fill="url(#g-cone)"/><path d="M14 54q20 12 40 0l2 12q-22 10-44 0z" fill="#c96a20"/><path d="M29 1q5-2 10 0l14 54q-19 8-38 0z" fill="#eef0f2"/><path d="M29 1q5-2 10 0l3 11q-8 3-16 0zM23 25q11 4 22 0l5 17q-16 5-31 0z" fill="#e68a2a"/></svg></div>
 <div class="app run d-flex align-items-center justify-content-center"><svg width="68" height="68"><rect width="68" height="68" rx="15" fill="url(#g-dc)"/><svg x="8.500" y="7.500" width="51" height="53" viewBox="0 0 16 16"><path fill="#fff" d="M13.545 2.907a13.200 13.200 0 0 0-3.257-1.011.05.05 0 0 0-.052.025c-.141.25-.297.577-.406.833a12.200 12.200 0 0 0-3.658 0 8 8 0 0 0-.412-.833.05.05 0 0 0-.052-.025c-1.125.194-2.220.534-3.257 1.011a.04.04 0 0 0-.021.018C.356 6.024-.213 9.047.066 12.032q.003.022.021.037a13.300 13.300 0 0 0 3.995 2.020.05.05 0 0 0 .056-.019q.463-.63.818-1.329a.05.05 0 0 0-.01-.059l-.018-.011a9 9 0 0 1-1.248-.595.05.05 0 0 1-.02-.066l.015-.019q.127-.095.248-.195a.05.05 0 0 1 .051-.007c2.619 1.196 5.454 1.196 8.041 0a.05.05 0 0 1 .053.007q.121.1.248.195a.05.05 0 0 1-.004.085 8 8 0 0 1-1.249.594.05.05 0 0 0-.03.03.05.05 0 0 0 .003.041c.24.465.515.909.817 1.329a.05.05 0 0 0 .056.019 13.200 13.200 0 0 0 4.001-2.020.05.05 0 0 0 .021-.037c.334-3.451-.559-6.449-2.366-9.106a.03.03 0 0 0-.02-.019m-8.198 7.307c-.789 0-1.438-.724-1.438-1.612s.637-1.613 1.438-1.613c.807 0 1.450.73 1.438 1.613 0 .888-.637 1.612-1.438 1.612m5.316 0c-.788 0-1.438-.724-1.438-1.612s.637-1.613 1.438-1.613c.807 0 1.451.73 1.438 1.613 0 .888-.631 1.612-1.438 1.612"/></svg></svg></div>
 <div class="dsep d-flex justify-content-center"><i></i></div>
 <div class="app low d-flex align-items-center justify-content-center"><svg width="56" height="76" viewBox="0 0 56 76"><path d="M0 2h56v8H0zM0 40h56v6H0z" fill="#222"/><path d="M10 0h34v6h12v34H0V12h10z" fill="#e8c83a"/><path d="M2 4h52v71H2z" fill="#e2e4d4"/><path d="M4 13h30v3H4zM4 17h26v2H4zM4 21h30v2H4z" fill="#9cc890"/><path d="M4 24h46v3H4zM4 30h30v2H4z" fill="#e0a860"/><path d="M4 35h40M4 39h36M4 44h46M4 60h46M4 64h40M4 70h46" stroke="#c5c8ba" stroke-width="1"/><path d="M4 32h50v3H4z" fill="#d0dde4"/><path d="M4 49h50v3H4zM4 53h48v2.500H4z" fill="#80c0e4"/><path d="M33 0h12l9 22q-10-2-19 1z" fill="#f6f6f6" stroke="#c8c8c8" stroke-width=".7"/><text x="28" y="69" font-size="11" fill="#555" text-anchor="middle">HTM</text></svg></div>
 <div class="app low d-flex align-items-center justify-content-center"><svg width="62" height="76" viewBox="0 0 62 76"><path d="M1 8l8 61q2 6 22 6t22-6l8-61z" fill="url(#g-trash)"/><ellipse cx="31" cy="8" rx="30" ry="7.500" fill="#cfb8ee" stroke="#f0ecf8" stroke-width="1.500"/></svg></div>
</div>
</body>
</html>
